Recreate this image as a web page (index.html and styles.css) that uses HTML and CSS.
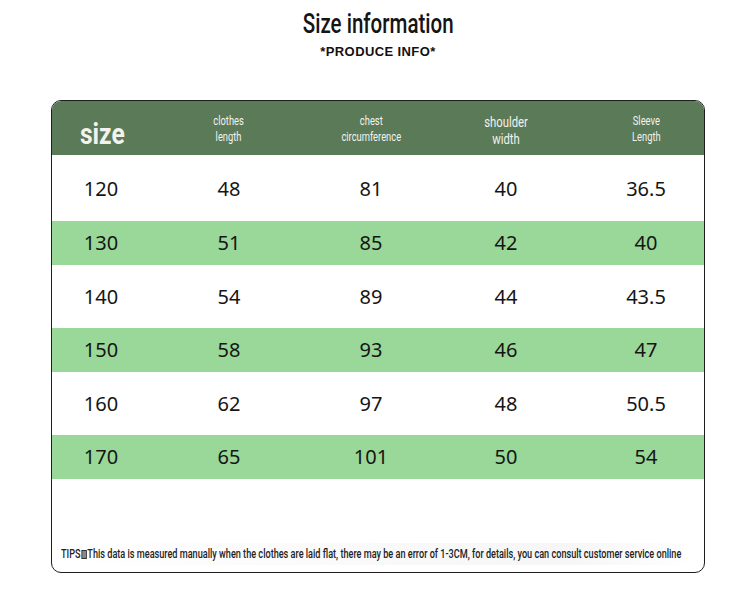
FILE: index.html
```html
<!DOCTYPE html>
<html>
<head>
<meta charset="utf-8">
<link rel="stylesheet" href="styles.css">
</head>
<body>
<div class="page">
  <header class="titles">
    <h1 class="title"><span class="nar">Size information</span></h1>
    <p class="subtitle">*PRODUCE INFO*</p>
  </header>
  <section class="chart">
    <div class="row head">
      <div class="cell c1 big"><span class="nar">size</span></div>
      <div class="cell c2 small"><span class="nar">clothes<br>length</span></div>
      <div class="cell c3 small"><span class="nar">chest<br>circumference</span></div>
      <div class="cell c4 mid"><span class="nar">shoulder<br>width</span></div>
      <div class="cell c5 small"><span class="nar">Sleeve<br>Length</span></div>
    </div>
    <div class="row w first"><div class="cell">120</div><div class="cell">48</div><div class="cell">81</div><div class="cell">40</div><div class="cell c5">36.5</div></div>
    <div class="row g"><div class="cell">130</div><div class="cell">51</div><div class="cell">85</div><div class="cell">42</div><div class="cell c5">40</div></div>
    <div class="row w"><div class="cell">140</div><div class="cell">54</div><div class="cell">89</div><div class="cell">44</div><div class="cell c5">43.5</div></div>
    <div class="row g"><div class="cell">150</div><div class="cell">58</div><div class="cell">93</div><div class="cell">46</div><div class="cell c5">47</div></div>
    <div class="row w"><div class="cell">160</div><div class="cell">62</div><div class="cell">97</div><div class="cell">48</div><div class="cell c5">50.5</div></div>
    <div class="row g"><div class="cell">170</div><div class="cell">65</div><div class="cell">101</div><div class="cell">50</div><div class="cell c5">54</div></div>
    <div class="spacer"></div>
    <div class="tips"><span class="tipstext">TIPS<span class="box"></span>This data is measured manually when the clothes are laid flat, there may be an error of 1-3CM, for details, you can consult customer service online</span></div>
  </section>
</div>
</body>
</html>
```
FILE: styles.css
```css
* { box-sizing: border-box; }
html, body { margin: 0; padding: 0; background: #fff; }
body { width: 750px; height: 610px; overflow: hidden; }
.page { padding-top: 8px; }
.nar { display: inline-block; transform: scaleX(0.78); transform-origin: center; }
.titles { text-align: center; margin-left: 6px; }
.title {
  margin: 0;
  font-family: Roboto, "Liberation Sans", sans-serif;
  font-weight: 500;
  font-size: 27px;
  line-height: 32px;
  color: #151515;
}
.title .nar { transform: scaleX(0.76); }
.subtitle {
  margin: 4px 0 0 0;
  font-family: "Liberation Sans", Arial, sans-serif;
  font-weight: bold;
  font-size: 13px;
  line-height: 15px;
  color: #111;
  letter-spacing: 0.4px;
}
.chart {
  margin: 41px 0 0 51px;
  width: 654px;
  height: 473px;
  border: 1.5px solid #1e1e1e;
  border-radius: 10px;
  overflow: hidden;
  display: flex;
  flex-direction: column;
}
.row {
  display: grid;
  grid-template-columns: 98px 158px 126px 144px 126px;
  align-items: center;
  justify-items: center;
  font-family: "Noto Sans", "Open Sans", sans-serif;
  font-size: 20px;
  color: #151515;
}
.row .c5 { padding-left: 10px; }
.g .cell { padding-bottom: 2px; }
.head {
  height: 54px;
  background: #5b7a58;
  color: #f2f2ee;
  font-family: Roboto, "Liberation Sans", sans-serif;
  text-align: center;
}
.head .big { font-size: 30px; font-weight: 700; padding-top: 10px; padding-left: 2px; }
.head .big .nar { transform: scaleX(0.82); }
.head .small { font-size: 12px; line-height: 16px; padding-top: 2px; }
.head .mid { font-size: 14.5px; line-height: 17px; padding-top: 6px; }
.w { height: 63px; background: #fff; }
.w.first { height: 66px; }
.g { height: 44px; background: #99d898; }
.spacer { flex: 1; }
.tips {
  margin: 0 0 7px 9px;
  width: 634px;
  height: 22px;
  background: linear-gradient(to right, #fff, #f6f6f6 80%, #fff);
  white-space: nowrap;
}
.tipstext {
  display: inline-block;
  transform: scaleX(0.76);
  transform-origin: left center;
  font-family: Roboto, "Liberation Sans", sans-serif;
  font-weight: 500;
  font-size: 12px;
  line-height: 22px;
  color: #222;
}
.box {
  display: inline-block;
  width: 7px;
  height: 9px;
  border: 1px solid #333;
  background: #888;
  margin: 0 1px;
  vertical-align: -1px;
}
```
